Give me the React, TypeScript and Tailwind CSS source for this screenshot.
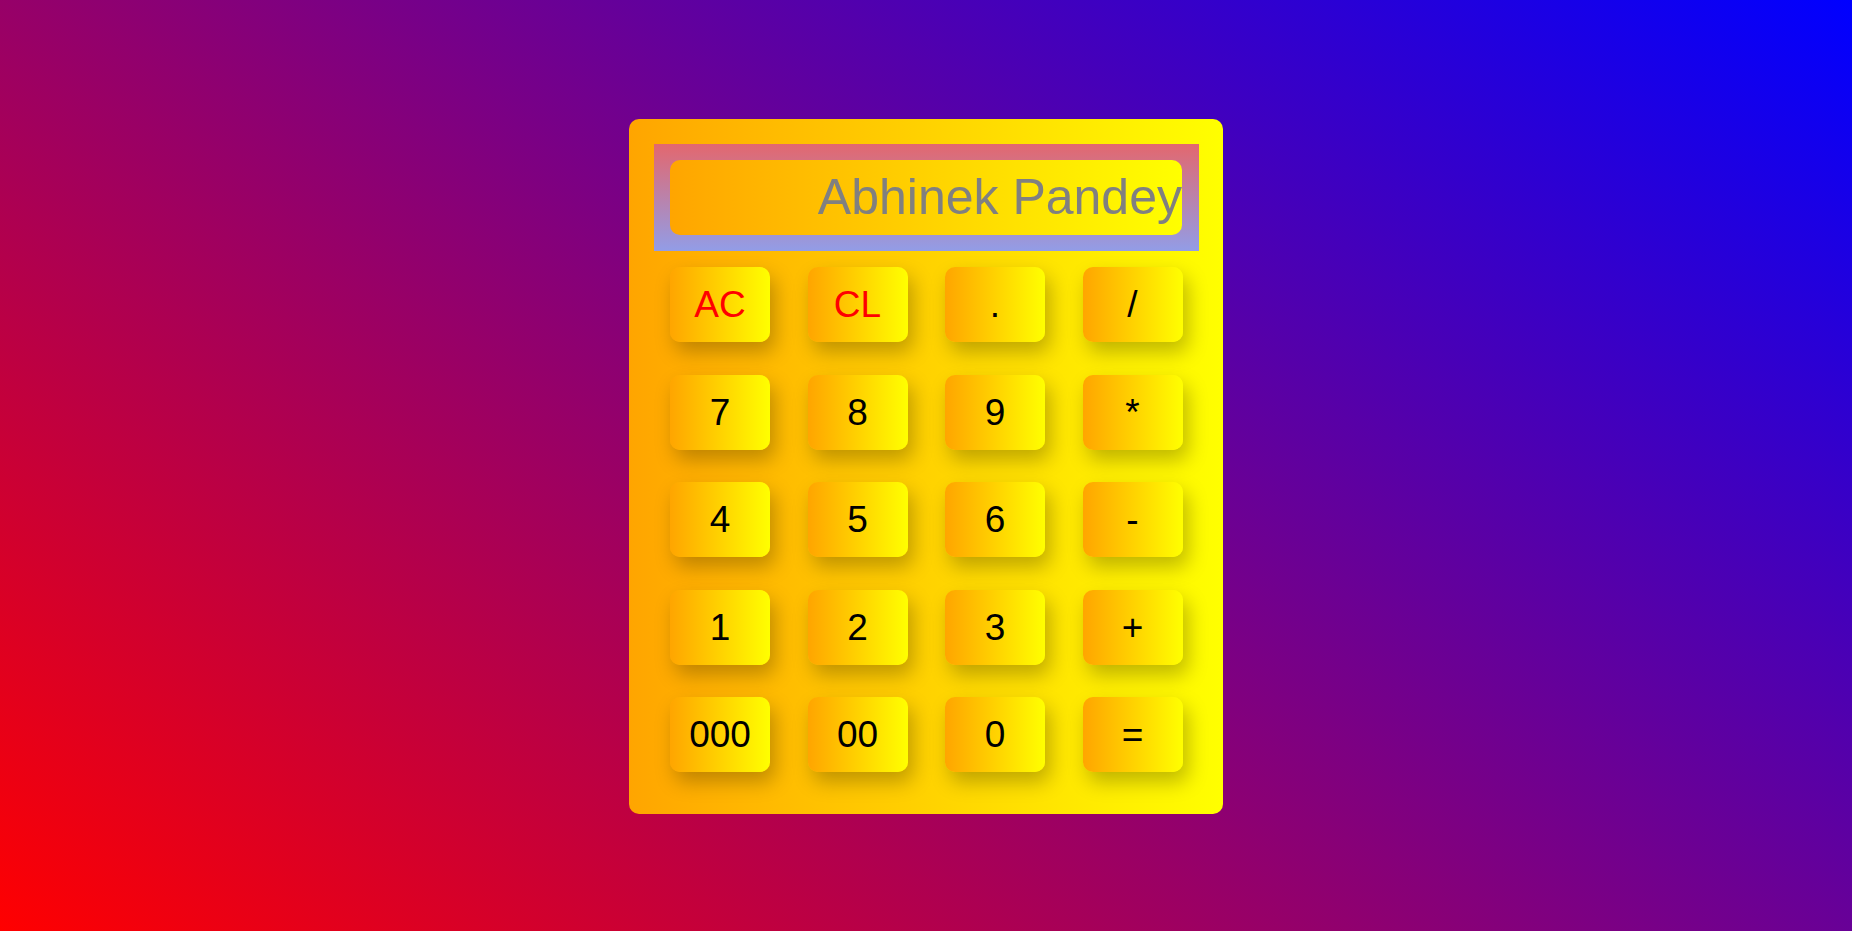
import React, { useState } from 'react'

const rows: string[][] = [
  ['AC', 'CL', '.', '/'],
  ['7', '8', '9', '*'],
  ['4', '5', '6', '-'],
  ['1', '2', '3', '+'],
  ['000', '00', '0', '='],
]

function Key({ label, onPress }: { label: string; onPress: (k: string) => void }) {
  const red = label === 'AC' || label === 'CL'
  return (
    <button
      onClick={() => onPress(label)}
      className={`w-[100px] h-[75px] rounded-[10px] bg-[linear-gradient(to_right,#ffa500,#ffff00)] shadow-[5px_10px_20px_rgba(0,0,0,0.25)] text-[37px] leading-none flex items-center justify-center cursor-pointer ${
        red ? 'text-[#ff0000]' : 'text-black'
      }`}
    >
      {label}
    </button>
  )
}

export default function App() {
  const [value, setValue] = useState('')

  const press = (k: string) => {
    if (k === 'AC') return setValue('')
    if (k === 'CL') return setValue((v) => v.slice(0, -1))
    if (k === '=') {
      try {
        // eslint-disable-next-line no-new-func
        setValue(String(Function(`return (${value})`)()))
      } catch {
        setValue('Error')
      }
      return
    }
    setValue((v) => v + k)
  }

  return (
    <div
      className="min-h-screen w-full flex items-center justify-center bg-[linear-gradient(36deg,#ff0000,#0000ff)]"
      style={{ fontFamily: '"Liberation Sans", Arial, sans-serif' }}
    >
      <div className="w-[594px] h-[695px] rounded-[10px] bg-[linear-gradient(to_right,#ffa500,#ffff00)] pt-[25px] px-[25px] mt-[2px]">
        <div className="w-[545px] h-[107px] bg-[linear-gradient(to_bottom,#e3676e,#929de7)] pt-[16px] px-[16px]">
          <input
            value={value}
            onChange={(e) => setValue(e.target.value)}
            placeholder="Abhinek Pandey"
            className="w-[512px] h-[75px] rounded-[10px] bg-[linear-gradient(to_right,#ffa500,#ffff00)] text-right text-[50px] text-[#808080] placeholder:text-[#808080] outline-none border-0 p-0"
          />
        </div>
        <div className="grid grid-cols-[repeat(4,100px)] gap-x-[37.5px] gap-y-[32.5px] pt-[16px] pl-[16px]">
          {rows.flat().map((k) => (
            <Key key={k} label={k} onPress={press} />
          ))}
        </div>
      </div>
    </div>
  )
}
